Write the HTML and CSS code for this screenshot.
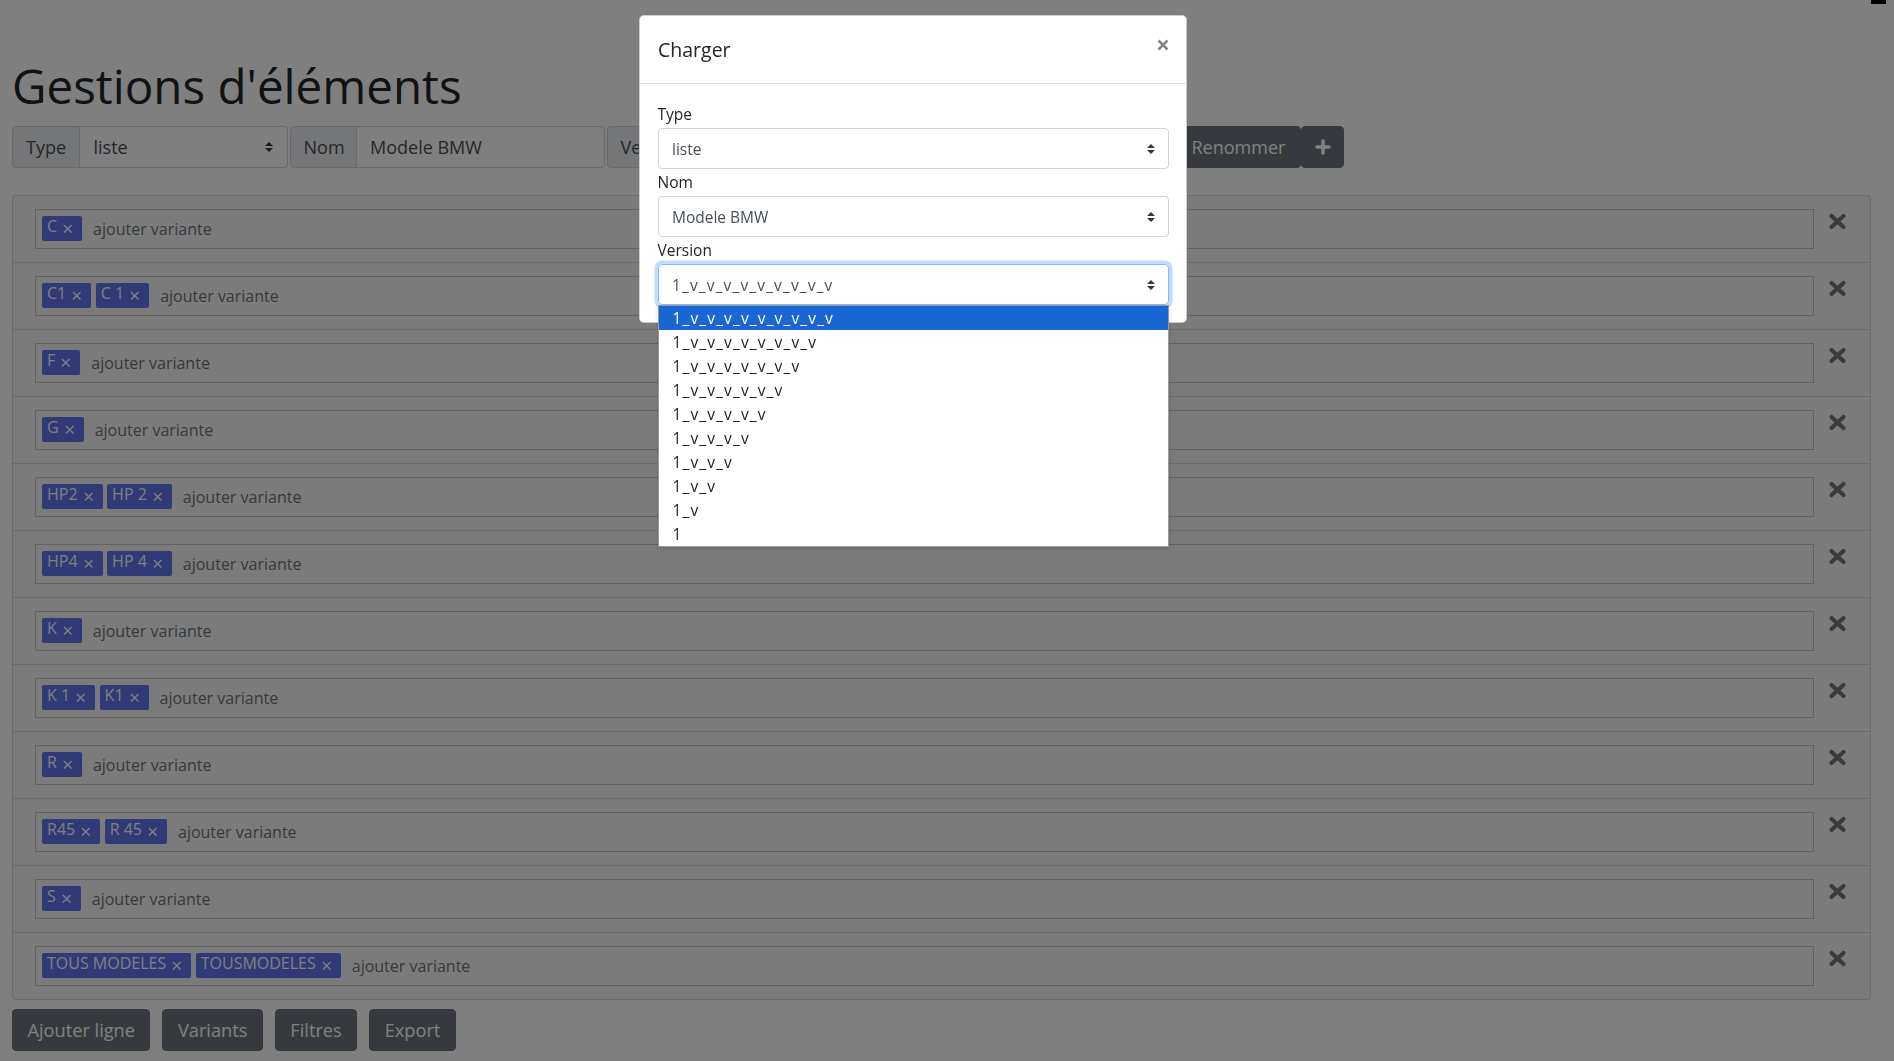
FILE: index.html
```html
<!DOCTYPE html>
<html lang="fr">
<head>
    <meta charset="UTF-8">
    <meta name="viewport" content="width=device-width, initial-scale=1.0">
    <title>Gestions d'éléments</title>
    <link rel="stylesheet" href="styles.css">
</head>
<body>
    <div class="page">
        <h1 class="title">Gestions d'éléments</h1>

        <div class="toolbar">
            <div class="input-group">
                <span class="addon addon-type">Type</span>
                <div class="control control-type">
                    <span>liste</span>
                    <svg class="arrows" width="8" height="10" viewBox="0 0 4 5"><path fill="#343a40" d="M2 0L0 2h4zm0 5L0 3h4z"/></svg>
                </div>
            </div>
            <div class="input-group">
                <span class="addon addon-nom">Nom</span>
                <div class="control control-nom"><span>Modele BMW</span></div>
            </div>
            <div class="input-group">
                <span class="addon addon-version">Version</span>
                <div class="control control-version">
                    <span></span>
                    <svg class="arrows" width="8" height="10" viewBox="0 0 4 5"><path fill="#343a40" d="M2 0L0 2h4zm0 5L0 3h4z"/></svg>
                </div>
            </div>
            <button class="btn btn-rename">Renommer</button>
            <button class="btn btn-plus">
                <svg width="16" height="16" viewBox="0 0 16 16"><path d="M8 2v12M2 8h12" stroke="#fff" stroke-width="3.6" stroke-linecap="round"/></svg>
            </button>
        </div>

        <div class="rows">
            <div class="row">
                <div class="tags"><span class="tag">C<svg class="tag-x" viewBox="0 0 10 10"><path d="M1 1L9 9M9 1L1 9"/></svg></span><span class="placeholder">ajouter variante</span></div>
                <svg class="remove" viewBox="0 0 19 17"><path d="M3.5 3L15.5 14M15.5 3L3.5 14"/></svg>
            </div>
            <div class="row">
                <div class="tags"><span class="tag">C1<svg class="tag-x" viewBox="0 0 10 10"><path d="M1 1L9 9M9 1L1 9"/></svg></span><span class="tag">C 1<svg class="tag-x" viewBox="0 0 10 10"><path d="M1 1L9 9M9 1L1 9"/></svg></span><span class="placeholder">ajouter variante</span></div>
                <svg class="remove" viewBox="0 0 19 17"><path d="M3.5 3L15.5 14M15.5 3L3.5 14"/></svg>
            </div>
            <div class="row">
                <div class="tags"><span class="tag">F<svg class="tag-x" viewBox="0 0 10 10"><path d="M1 1L9 9M9 1L1 9"/></svg></span><span class="placeholder">ajouter variante</span></div>
                <svg class="remove" viewBox="0 0 19 17"><path d="M3.5 3L15.5 14M15.5 3L3.5 14"/></svg>
            </div>
            <div class="row">
                <div class="tags"><span class="tag">G<svg class="tag-x" viewBox="0 0 10 10"><path d="M1 1L9 9M9 1L1 9"/></svg></span><span class="placeholder">ajouter variante</span></div>
                <svg class="remove" viewBox="0 0 19 17"><path d="M3.5 3L15.5 14M15.5 3L3.5 14"/></svg>
            </div>
            <div class="row">
                <div class="tags"><span class="tag">HP2<svg class="tag-x" viewBox="0 0 10 10"><path d="M1 1L9 9M9 1L1 9"/></svg></span><span class="tag">HP 2<svg class="tag-x" viewBox="0 0 10 10"><path d="M1 1L9 9M9 1L1 9"/></svg></span><span class="placeholder">ajouter variante</span></div>
                <svg class="remove" viewBox="0 0 19 17"><path d="M3.5 3L15.5 14M15.5 3L3.5 14"/></svg>
            </div>
            <div class="row">
                <div class="tags"><span class="tag">HP4<svg class="tag-x" viewBox="0 0 10 10"><path d="M1 1L9 9M9 1L1 9"/></svg></span><span class="tag">HP 4<svg class="tag-x" viewBox="0 0 10 10"><path d="M1 1L9 9M9 1L1 9"/></svg></span><span class="placeholder">ajouter variante</span></div>
                <svg class="remove" viewBox="0 0 19 17"><path d="M3.5 3L15.5 14M15.5 3L3.5 14"/></svg>
            </div>
            <div class="row">
                <div class="tags"><span class="tag">K<svg class="tag-x" viewBox="0 0 10 10"><path d="M1 1L9 9M9 1L1 9"/></svg></span><span class="placeholder">ajouter variante</span></div>
                <svg class="remove" viewBox="0 0 19 17"><path d="M3.5 3L15.5 14M15.5 3L3.5 14"/></svg>
            </div>
            <div class="row">
                <div class="tags"><span class="tag">K 1<svg class="tag-x" viewBox="0 0 10 10"><path d="M1 1L9 9M9 1L1 9"/></svg></span><span class="tag">K1<svg class="tag-x" viewBox="0 0 10 10"><path d="M1 1L9 9M9 1L1 9"/></svg></span><span class="placeholder">ajouter variante</span></div>
                <svg class="remove" viewBox="0 0 19 17"><path d="M3.5 3L15.5 14M15.5 3L3.5 14"/></svg>
            </div>
            <div class="row">
                <div class="tags"><span class="tag">R<svg class="tag-x" viewBox="0 0 10 10"><path d="M1 1L9 9M9 1L1 9"/></svg></span><span class="placeholder">ajouter variante</span></div>
                <svg class="remove" viewBox="0 0 19 17"><path d="M3.5 3L15.5 14M15.5 3L3.5 14"/></svg>
            </div>
            <div class="row">
                <div class="tags"><span class="tag">R45<svg class="tag-x" viewBox="0 0 10 10"><path d="M1 1L9 9M9 1L1 9"/></svg></span><span class="tag">R 45<svg class="tag-x" viewBox="0 0 10 10"><path d="M1 1L9 9M9 1L1 9"/></svg></span><span class="placeholder">ajouter variante</span></div>
                <svg class="remove" viewBox="0 0 19 17"><path d="M3.5 3L15.5 14M15.5 3L3.5 14"/></svg>
            </div>
            <div class="row">
                <div class="tags"><span class="tag">S<svg class="tag-x" viewBox="0 0 10 10"><path d="M1 1L9 9M9 1L1 9"/></svg></span><span class="placeholder">ajouter variante</span></div>
                <svg class="remove" viewBox="0 0 19 17"><path d="M3.5 3L15.5 14M15.5 3L3.5 14"/></svg>
            </div>
            <div class="row">
                <div class="tags"><span class="tag">TOUS MODELES<svg class="tag-x" viewBox="0 0 10 10"><path d="M1 1L9 9M9 1L1 9"/></svg></span><span class="tag">TOUSMODELES<svg class="tag-x" viewBox="0 0 10 10"><path d="M1 1L9 9M9 1L1 9"/></svg></span><span class="placeholder">ajouter variante</span></div>
                <svg class="remove" viewBox="0 0 19 17"><path d="M3.5 3L15.5 14M15.5 3L3.5 14"/></svg>
            </div>
        </div>

        <div class="actions">
            <button class="btn">Ajouter ligne</button>
            <button class="btn">Variants</button>
            <button class="btn">Filtres</button>
            <button class="btn">Export</button>
        </div>
    </div>

    <div class="corner"></div>
    <div class="backdrop"></div>

    <div class="modal">
        <div class="modal-dialog">
            <div class="modal-header">
                <h5 class="modal-title">Charger</h5>
                <svg class="close" width="12" height="12" viewBox="0 0 12 12"><path d="M1.5 1.5L10.5 10.5M10.5 1.5L1.5 10.5"/></svg>
            </div>
            <div class="modal-body">
                <label class="label">Type</label>
                <div class="select">
                    <span>liste</span>
                    <svg class="arrows" width="8" height="10" viewBox="0 0 4 5"><path fill="#343a40" d="M2 0L0 2h4zm0 5L0 3h4z"/></svg>
                </div>
                <label class="label">Nom</label>
                <div class="select">
                    <span>Modele BMW</span>
                    <svg class="arrows" width="8" height="10" viewBox="0 0 4 5"><path fill="#343a40" d="M2 0L0 2h4zm0 5L0 3h4z"/></svg>
                </div>
                <label class="label">Version</label>
                <div class="select focus">
                    <span class="version">1_v_v_v_v_v_v_v_v_v</span>
                    <svg class="arrows" width="8" height="10" viewBox="0 0 4 5"><path fill="#343a40" d="M2 0L0 2h4zm0 5L0 3h4z"/></svg>
                    <div class="options">
                        <div class="option selected">1_v_v_v_v_v_v_v_v_v</div>
                        <div class="option">1_v_v_v_v_v_v_v_v</div>
                        <div class="option">1_v_v_v_v_v_v_v</div>
                        <div class="option">1_v_v_v_v_v_v</div>
                        <div class="option">1_v_v_v_v_v</div>
                        <div class="option">1_v_v_v_v</div>
                        <div class="option">1_v_v_v</div>
                        <div class="option">1_v_v</div>
                        <div class="option">1_v</div>
                        <div class="option">1</div>
                    </div>
                </div>
            </div>
        </div>
    </div>
</body>
</html>
```

FILE: styles.css
```css
body {
    margin: 0;
    font-family: "Open Sans", "Noto Sans", sans-serif;
    font-size: 16px;
    color: #212529;
    background-color: #fff;
}
.page {
    padding: 57px 23px 0 12px;
}
.title {
    margin: 0 0 12px;
    font-size: 47.5px;
    font-weight: 400;
    line-height: 1.2;
}
.toolbar {
    display: flex;
    height: 42px;
    font-size: 18px;
}
.input-group {
    display: flex;
    margin-right: 2px;
}
.addon {
    display: flex;
    align-items: center;
    padding: 0 13px;
    background-color: #e9ecef;
    border: 1px solid #ced4da;
    border-radius: 4px 0 0 4px;
    color: #495057;
}
.addon-type {
    width: 68px;
    box-sizing: border-box;
}
.addon-nom {
    width: 67px;
    box-sizing: border-box;
}
.addon-version {
    width: 92px;
    box-sizing: border-box;
}
.control {
    display: flex;
    align-items: center;
    justify-content: space-between;
    box-sizing: border-box;
    padding: 0 14px 0 13.5px;
    border: 1px solid #ced4da;
    border-left: 0;
    border-radius: 0 4px 4px 0;
    background-color: #fff;
    color: #495057;
}
.control-type {
    width: 207.5px;
}
.control-nom {
    width: 248px;
}
.control-version {
    width: 477px;
}
.btn {
    display: flex;
    align-items: center;
    justify-content: center;
    padding: 0 14.5px;
    font: inherit;
    color: #fff;
    background-color: #6c757d;
    border: 1px solid #6c757d;
    border-radius: 4px;
}
.btn-rename {
    margin-left: -2px;
    padding: 0 15px;
}
.btn-plus {
    width: 43px;
    padding: 0;
}
.rows {
    margin-top: 26.5px;
    border: 1px solid rgba(0,0,0,0.125);
    border-radius: 4px;
    background-color: #f7f7f7;
}
.row {
    display: flex;
    padding: 13px 23px 13px 21.5px;
    border-top: 1px solid rgba(0,0,0,0.125);
}
.row:first-child {
    border-top: 0;
}
.tags {
    flex: 1;
    display: flex;
    align-items: center;
    height: 40px;
    box-sizing: border-box;
    padding-left: 6.5px;
    border: 1px solid #c4c4c4;
}
.tag {
    padding: 0 9.5px 5px 5px;
    margin-right: 4.5px;
    line-height: 20px;
    color: #fff;
    background-color: #5e74ee;
    border-radius: 2px;
}
.tag-x {
    width: 9.5px;
    height: 9.5px;
    margin-left: 6px;
    vertical-align: -1px;
    fill: none;
    stroke: #fff;
    stroke-width: 1.5;
}
.placeholder {
    margin-left: 6.5px;
    color: #6c757d;
}
.remove {
    align-self: flex-start;
    width: 19px;
    height: 17px;
    margin: 4px 0 0 14px;
    fill: none;
    stroke: #777;
    stroke-width: 4.2;
    stroke-linecap: round;
}
.actions {
    display: flex;
    gap: 12px;
    margin-top: 9px;
}
.actions .btn {
    height: 42px;
    font-size: 18.2px;
}
.corner {
    position: fixed;
    top: 0;
    left: 1871px;
    width: 15px;
    height: 4px;
    background-color: #000;
}
.backdrop {
    position: fixed;
    top: 0;
    left: 0;
    right: 0;
    bottom: 0;
    background-color: rgba(0,0,0,0.5);
}
.modal {
    position: fixed;
    top: 0;
    left: 0;
    right: 0;
    bottom: 0;
}
.modal-dialog {
    width: 548px;
    margin: 15px 0 0 639px;
    box-sizing: border-box;
    background-color: #fff;
    border: 1px solid rgba(0,0,0,0.2);
    border-radius: 5px;
}
.modal-header {
    display: flex;
    align-items: center;
    justify-content: space-between;
    height: 68px;
    box-sizing: border-box;
    padding: 0 17px 0 18px;
    border-bottom: 1px solid #dee2e6;
}
.modal-title {
    margin: 0;
    font-size: 19.5px;
    font-weight: 400;
}
.close {
    margin-bottom: 9px;
    fill: none;
    stroke: #858585;
    stroke-width: 2.5;
}
.modal-body {
    padding: 17px 17px 17px 17.5px;
}
.label {
    display: block;
    font-size: 15.5px;
    line-height: 27px;
}
.select {
    position: relative;
    display: flex;
    align-items: center;
    justify-content: space-between;
    height: 41px;
    box-sizing: border-box;
    padding: 0 13px 0 13.5px;
    font-size: 15.5px;
    color: #495057;
    border: 1px solid #ced4da;
    border-radius: 4px;
}
.select.focus {
    border-color: #80bdff;
    box-shadow: 0 0 0 3.5px rgba(0,123,255,0.25);
}
.version {
    letter-spacing: 1.15px;
}
.options {
    position: absolute;
    top: calc(100% + 1px);
    left: -1px;
    right: -1px;
    background-color: #fff;
    border: 1px solid #9a9a9a;
    color: #222;
    letter-spacing: 1.15px;
    box-shadow: 0 2px 4px rgba(0,0,0,0.15);
}
.option {
    height: 24px;
    line-height: 24px;
    padding-left: 14px;
}
.option.selected {
    background-color: #1967d2;
    color: #fff;
}
```
